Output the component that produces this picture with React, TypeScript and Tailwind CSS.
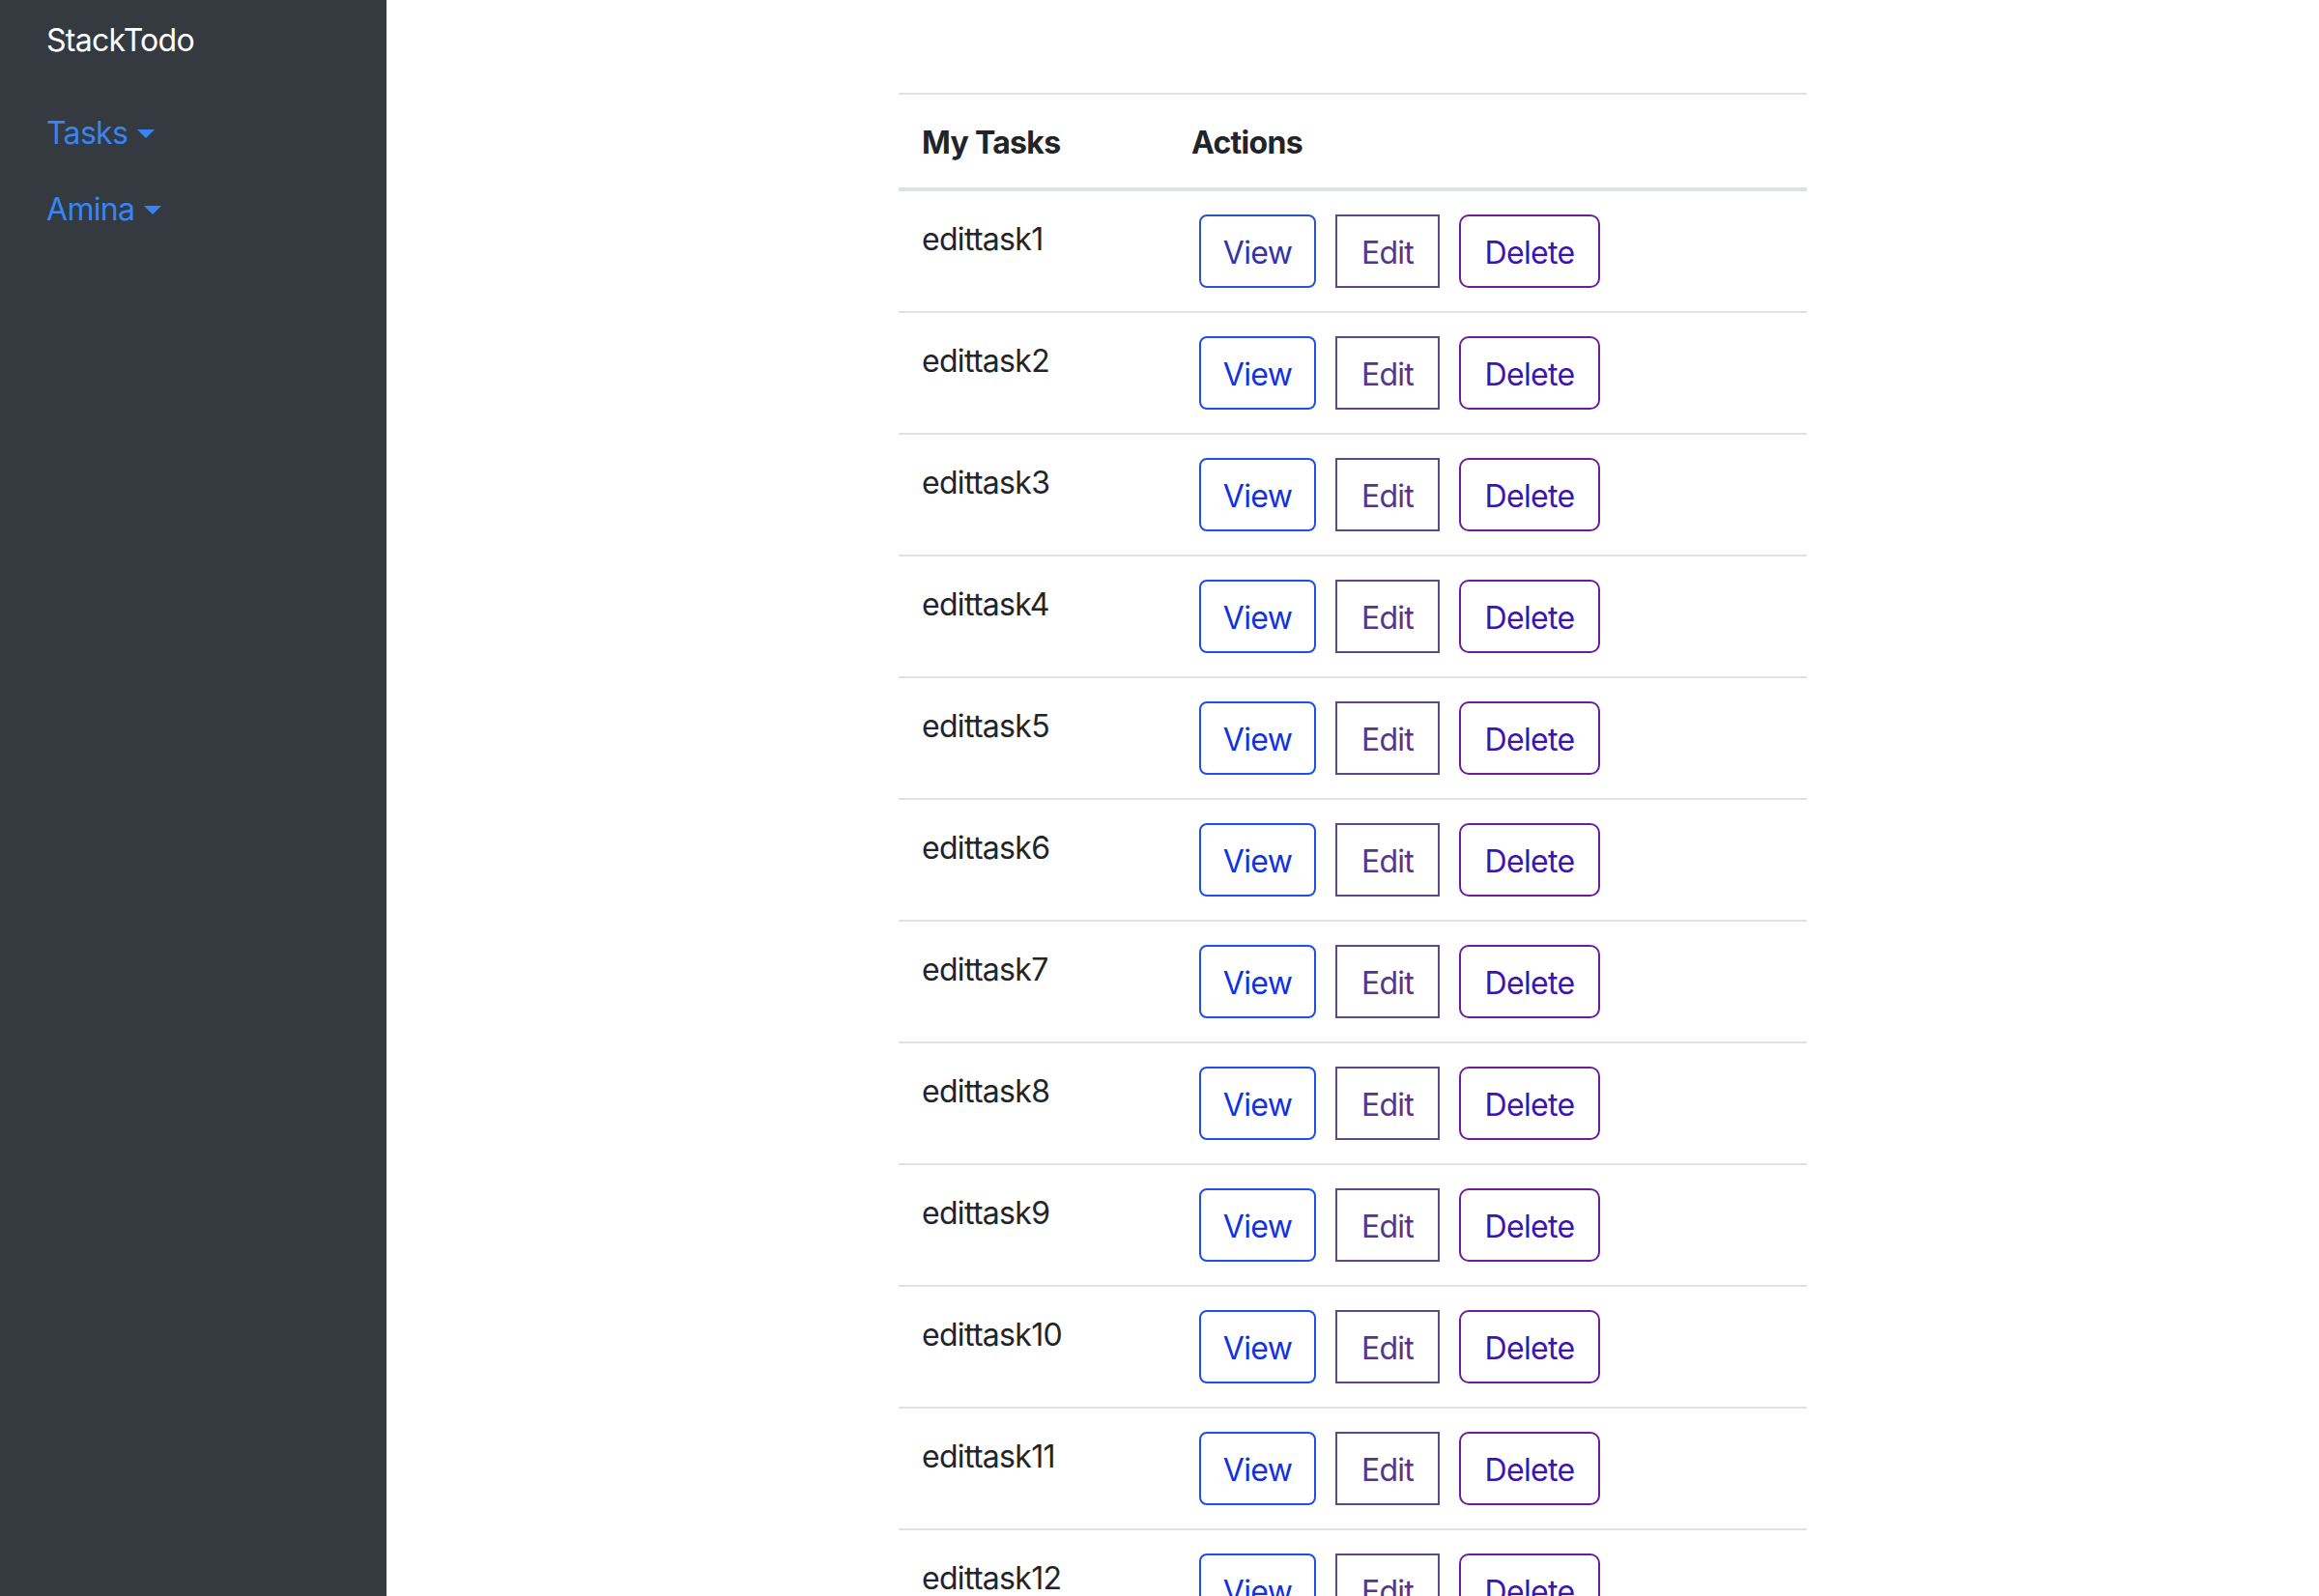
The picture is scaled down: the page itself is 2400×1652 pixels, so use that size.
import React from 'react';

const tasks = Array.from({ length: 12 }, (_, i) => `edittask${i + 1}`);

function Caret() {
  return (
    <span className="ml-[10px] inline-block h-0 w-0 border-x-[9px] border-t-[9px] border-x-transparent border-t-[#3884f4]" />
  );
}

function Sidebar() {
  return (
    <aside className="w-[400px] shrink-0 bg-[#343a40] px-[48px] pt-[18px]">
      <div className="text-[32px] leading-[48px] text-white">StackTodo</div>
      <div className="mt-[48px] flex items-center text-[32px] leading-[48px] text-[#3884f4]">
        Tasks
        <Caret />
      </div>
      <div className="mt-[31px] flex items-center text-[32px] leading-[48px] text-[#3884f4]">
        Amina
        <Caret />
      </div>
    </aside>
  );
}

function TaskRow({ name, visited }: { name: string; visited: boolean }) {
  return (
    <div className="grid grid-cols-[279px_1fr] border-b-2 border-[#dee2e6]">
      <div className="px-[24px] pt-[26px] pb-[22px] text-[32px] leading-[48px] text-[#212529]">{name}</div>
      <div className="flex gap-[20px] py-[24px] pl-[32px]">
        <button
          className={
            visited
              ? 'h-[76px] w-[121px] rounded-lg border-2 border-[#2e52c7] pt-[3px] text-[32px] leading-[48px] text-[#3333a8]'
              : 'h-[76px] w-[121px] rounded-lg border-2 border-[#1f4fe8] pt-[3px] text-[32px] leading-[48px] text-[#1232e0]'
          }
        >
          View
        </button>
        <button className="h-[76px] w-[108px] border-2 border-[#5b4a87] pt-[3px] text-[32px] leading-[48px] text-[#573689]">
          Edit
        </button>
        <button className="h-[76px] w-[146px] rounded-[10px] border-2 border-[#6b1d9b] pt-[3px] text-[32px] leading-[48px] text-[#3c14b4]">
          Delete
        </button>
      </div>
    </div>
  );
}

export default function App() {
  return (
    <div className="flex min-h-screen bg-white font-['Inter',sans-serif] tracking-[-0.7px]">
      <Sidebar />
      <main className="flex flex-1 justify-center pt-[96px]">
        <div className="w-[940px]">
          <div className="grid grid-cols-[279px_1fr] border-t-2 border-b-4 border-[#dee2e6] font-bold text-[#212529]">
            <div className="px-[24px] pt-[26px] pb-[22px] text-[32px] leading-[48px]">My Tasks</div>
            <div className="px-[24px] pt-[26px] pb-[22px] text-[32px] leading-[48px]">Actions</div>
          </div>
          {tasks.map((t, i) => (
            <TaskRow key={t} name={t} visited={i === 0} />
          ))}
        </div>
      </main>
    </div>
  );
}
